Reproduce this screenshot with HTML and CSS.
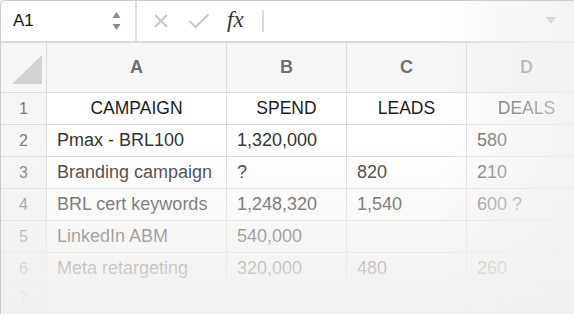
FILE: index.html
```html
<!DOCTYPE html>
<html lang="en">
<head>
  <meta charset="UTF-8" />
  <title>Sheet</title>
  <link rel="stylesheet" href="styles.css">
</head>
<body>
  <div class="sheet">
    <div class="toolbar">
      <div class="namebox">
        <span class="ref">A1</span>
        <span class="stepper">
          <svg width="9" height="20" viewBox="0 0 9 20"><path d="M4.5 1 L8.5 7 L0.5 7 Z" fill="#8a8a8a"/><path d="M0.5 13 L8.5 13 L4.5 19 Z" fill="#8a8a8a"/></svg>
        </span>
      </div>
      <div class="formula">
        <svg class="tool" width="16" height="16" viewBox="0 0 16 16"><path d="M2 2 L14 14 M14 2 L2 14" stroke="#c9c9c9" stroke-width="2" fill="none"/></svg>
        <svg class="tool" width="22" height="16" viewBox="0 0 22 16"><path d="M1.5 8 L7.5 14 L20.5 1.5" stroke="#c9c9c9" stroke-width="2" fill="none"/></svg>
        <span class="fx">fx</span>
        <span class="bar"></span>
        <span class="fill"></span>
        <svg class="drop" width="10" height="8" viewBox="0 0 10 8"><path d="M0 0 L10 0 L5 7 Z" fill="#9a9a9a"/></svg>
      </div>
    </div>

    <div class="grid">
      <div class="corner"><span class="tri"></span></div>
      <div class="colhead">A</div>
      <div class="colhead">B</div>
      <div class="colhead">C</div>
      <div class="colhead">D</div>

      <div class="rowhead">1</div>
      <div class="cell title">CAMPAIGN</div>
      <div class="cell title">SPEND</div>
      <div class="cell title">LEADS</div>
      <div class="cell title">DEALS</div>

      <div class="rowhead">2</div>
      <div class="cell">Pmax - BRL100</div>
      <div class="cell">1,320,000</div>
      <div class="cell"></div>
      <div class="cell">580</div>

      <div class="rowhead">3</div>
      <div class="cell">Branding campaign</div>
      <div class="cell">?</div>
      <div class="cell">820</div>
      <div class="cell">210</div>

      <div class="rowhead">4</div>
      <div class="cell">BRL cert keywords</div>
      <div class="cell">1,248,320</div>
      <div class="cell">1,540</div>
      <div class="cell">600 ?</div>

      <div class="rowhead">5</div>
      <div class="cell">LinkedIn ABM</div>
      <div class="cell">540,000</div>
      <div class="cell"></div>
      <div class="cell"></div>

      <div class="rowhead">6</div>
      <div class="cell">Meta retargeting</div>
      <div class="cell">320,000</div>
      <div class="cell">480</div>
      <div class="cell">260</div>

      <div class="rowhead last">7</div>
      <div class="cell last"></div>
      <div class="cell last"></div>
      <div class="cell last"></div>
      <div class="cell last"></div>
    </div>

    <div class="fade-right"></div>
    <div class="fade-bottom"></div>
  </div>
</body>
</html>
```

FILE: styles.css
```css
body {
  margin: 0;
  background: #f2f1f0;
  font-family: 'Liberation Sans', Arial, sans-serif;
}
.sheet {
  position: relative;
  width: 600px;
  height: 313px;
  border: 1px solid #cdcdcd;
  border-bottom: none;
  border-radius: 6px 6px 0 0;
  overflow: hidden;
  background: #f6f6f6;
}
.toolbar {
  display: flex;
  height: 40px;
  background: #fff;
  border-bottom: 2px solid #dadada;
}
.namebox {
  width: 108px;
  padding: 0 14px 0 12px;
  display: flex;
  align-items: center;
  justify-content: space-between;
  border-right: 2px solid #dedede;
}
.ref {
  font-size: 17px;
  color: #111;
}
.stepper svg {
  display: block;
}
.formula {
  flex: 1;
  display: flex;
  align-items: center;
  padding-left: 16px;
}
.tool {
  margin-right: 19px;
}
.fx {
  font-family: 'Liberation Serif', serif;
  font-style: italic;
  font-size: 23px;
  color: #333;
  margin-left: -2px;
  margin-top: -3px;
}
.bar {
  width: 2px;
  height: 22px;
  background: #dcdcdc;
  margin-left: 18px;
}
.fill {
  flex: 1;
}
.drop {
  margin-right: 45px;
}
.grid {
  display: grid;
  grid-template-columns: 46px 180px 120px 120px 120px;
  grid-template-rows: 50px repeat(6, 32px) 28px;
}
.grid > div {
  border-right: 1px solid #dcdcdc;
  border-bottom: 1px solid #dcdcdc;
  box-sizing: border-box;
}
.grid > .last {
  border-bottom: none;
}
.corner {
  position: relative;
  background: #f6f6f6;
}
.tri {
  position: absolute;
  left: 11px;
  top: 12px;
  width: 30px;
  height: 29px;
  background: #d2d2d2;
  clip-path: polygon(100% 0, 100% 100%, 0 100%);
}
.colhead {
  display: flex;
  align-items: center;
  justify-content: center;
  font-size: 18px;
  font-weight: bold;
  color: #707070;
  background: #f6f6f6;
}
.rowhead {
  display: flex;
  align-items: center;
  justify-content: center;
  font-size: 16px;
  color: #7a7a7a;
  background: #f6f6f6;
}
.cell {
  display: flex;
  align-items: center;
  padding-left: 10px;
  font-size: 18px;
  color: #333;
  background: #fff;
  white-space: nowrap;
}
.cell.title {
  justify-content: center;
  padding-left: 0;
  font-size: 17.5px;
  color: #1c1c1c;
}
.fade-right {
  position: absolute;
  inset: 0;
  pointer-events: none;
  background: linear-gradient(to right,
    rgba(242, 241, 240, 0) 440px,
    rgba(242, 241, 240, 0.45) 490px,
    rgba(242, 241, 240, 0.62) 530px,
    rgba(242, 241, 240, 0.8) 574px);
}
.fade-bottom {
  position: absolute;
  inset: 0;
  pointer-events: none;
  background: linear-gradient(to bottom,
    rgba(242, 241, 240, 0) 140px,
    rgba(242, 241, 240, 0.18) 174px,
    rgba(242, 241, 240, 0.42) 206px,
    rgba(242, 241, 240, 0.6) 238px,
    rgba(242, 241, 240, 0.8) 270px,
    rgba(242, 241, 240, 0.94) 300px);
}
```
